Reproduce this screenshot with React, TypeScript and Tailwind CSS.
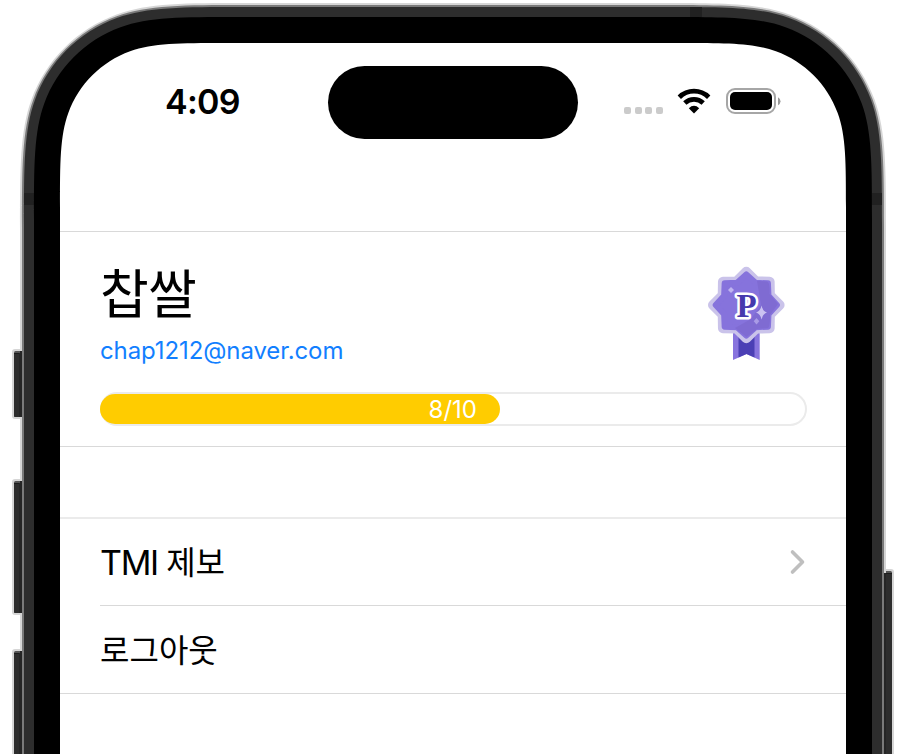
import React from "react";

const latin = "font-['Inter','Noto_Sans_CJK_KR',sans-serif]";
const korean = "font-['Noto_Sans_CJK_KR',sans-serif]";

// Top half of a continuous-corner rectangle, open past the bottom of the page.
function shell(left: number, top: number, right: number, r: number) {
  const k = [1.48, 1.08, 0.837, 0.631494, 0.074911, 0.372824, 0.169059];
  const [a, b, c, f, g, h, i] = k.map((n) => n * r);
  const L = (x: number, y: number) => `${left + x} ${top + y}`;
  const R = (x: number, y: number) => `${right - x} ${top + y}`;
  return [
    `M${left} 800 L${L(0, a)}`,
    `C${L(0, b)} ${L(0, c)} ${L(g, f)}`,
    `C${L(i, h)} ${L(h, i)} ${L(f, g)}`,
    `C${L(c, 0)} ${L(b, 0)} ${L(a, 0)}`,
    `L${R(a, 0)} C${R(b, 0)} ${R(c, 0)} ${R(f, g)}`,
    `C${R(h, i)} ${R(i, h)} ${R(g, f)}`,
    `C${R(0, c)} ${R(0, b)} ${R(0, a)} L${right} 800 Z`,
  ].join(" ");
}

function SideButton({ y, h, right = false }: { y: number; h: number; right?: boolean }) {
  return (
    <g transform={right ? "translate(906 0) scale(-1 1)" : undefined}>
      <rect x="12" y={y} width="14" height={h} rx="3" fill="#d6d6d6" />
      <rect x="14" y={y + 2} width="12" height={h - 4} rx="1.5" fill="#555" />
      <rect x="14" y={y + 4} width="12" height={h - 6} rx="1" fill="#2d2d2d" />
      <rect x="14" y={y + 4} width="8" height="1" fill="#1c1c1c" />
      <rect x={right ? 20 : 19} y={y + 4} width="3" height={h - 6} fill="#252525" />
    </g>
  );
}

function DeviceArtwork() {
  return (
    <svg className="pointer-events-none absolute inset-0" width="906" height="754" viewBox="0 0 906 754" aria-hidden="true">
      <SideButton y={349} h={70} />
      <SideButton y={479} h={136} />
      <SideButton y={649} h={140} />
      <SideButton y={569} h={220} right />
      <path d={shell(20, 3, 886, 153)} fill="#d6d6d6" />
      <path d="M20 351h2v66h-2zM20 481h2v132h-2zM20 651h2v110h-2zM884 573h2v190h-2z" fill="#252525" />
      <path d={shell(22, 5, 884, 150)} fill="#7a7a7a" />
      <path d={shell(24, 7, 882, 147)} fill="#2d2d2d" />
      <path d="M24 193h10v12H24zM872 193h10v12h-10zM690 7h12v10h-12z" fill="#212121" />
      <path d={shell(34, 17, 872, 137)} fill="#000" />
      <path d={shell(60, 43, 846, 111)} fill="#fff" />
    </svg>
  );
}

// Eight-pointed seal outline; the diagonal points are a little shorter.
function seal(tip: number, diagonal: number, valley: number) {
  return Array.from({ length: 16 }, (_, n) => {
    const r = n % 2 ? valley : n % 4 ? diagonal : tip;
    const t = (n * Math.PI) / 8;
    return `${(39.3 + r * Math.sin(t)).toFixed(2)},${(39 - r * Math.cos(t)).toFixed(2)}`;
  }).join(" ");
}

function Badge() {
  return (
    <svg width="78" height="95" viewBox="0 0 78 95" aria-hidden="true">
      <path d="M26 64H52.700V94L39.500 88L26 94Z" fill="#8874de" />
      <path d="M31.500 64H47.500V91.600L39.500 88L31.500 91.600Z" fill="#4b3fb5" />
      <polygon points={seal(33.3, 33, 25.5)} fill="#cac3ea" stroke="#cac3ea" strokeWidth="10" strokeLinejoin="round" />
      <polygon points={seal(30.6, 30.6, 24)} fill="#8673dc" stroke="#8673dc" strokeWidth="6" strokeLinejoin="round" />
      <path d="M50 15L60 15.500Q63 16 62.500 28L71 38L63 49Q63 61 61 62L50 63L39.500 71L28 62L44 53L54 39Z" fill="#7f6bd2" />
      <path d="M54.500 39.500Q55.500 45 60 46.500Q55.500 48 54.500 53.500Q53.500 48 49 46.500Q53.500 45 54.500 39.500Z" fill="#cbc2f1" />
      <path d="M24 21l3 3-3 3-3-3z" fill="#bfb4f0" />
      <path d="M49.500 52l2.800 3.300-2.800 3.300-2.800-3.300z" fill="#a99be6" />
      <text x="39.500" y="51" textAnchor="middle" fontFamily="Liberation Serif, serif" fontWeight="700" fontSize="33" fill="#4539ae" stroke="#fff" strokeWidth="5" strokeLinejoin="round" paintOrder="stroke">
        P
      </text>
    </svg>
  );
}

function StatusBar() {
  return (
    <header className="flex h-[96px] items-start">
      <div className={`${latin} mt-[39px] w-[268px] pl-[105px] text-[34px] leading-[40px] font-semibold tracking-[-0.7px]`}>4:09</div>
      <div className="mt-[23px] h-[73px] w-[250px] rounded-full bg-black" />
      <div className="ml-[46px] mt-[44px] flex items-start">
        <div className="mt-[20px] flex gap-[3.67px]">
          {[0, 1, 2, 3].map((n) => (
            <span key={n} className="size-[7px] rounded-[2px] bg-[#cbcbcb]" />
          ))}
        </div>
        <svg className="ml-[14px] mt-px" width="34" height="26" viewBox="0 0 34 26" fill="none" stroke="#000" aria-hidden="true">
          <path d="M2.300 9.200Q8.500 3.200 17 3.200T31.700 9.200" strokeWidth="4.800" />
          <path d="M7.800 15Q11.700 11.300 17 11.300T26.200 15" strokeWidth="4.700" />
          <path d="M11.800 20.200Q17 15.400 22.200 20.200L17 25.500Z" fill="#000" stroke="none" />
        </svg>
        <svg className="ml-[15px] mt-px" width="57" height="27" viewBox="0 0 57 27" aria-hidden="true">
          <rect x="1" y="1" width="48" height="24" rx="8" fill="none" stroke="#a6a6a6" strokeWidth="2" />
          <rect x="4" y="4" width="42" height="18" rx="5" />
          <path d="M52 9.200Q54.500 10.500 54.500 13.200T52 17.300Z" fill="#999" />
        </svg>
      </div>
    </header>
  );
}

export default function App() {
  return (
    <div className="relative h-[754px] w-[906px] overflow-hidden bg-white text-black">
      <DeviceArtwork />
      <main className="relative ml-[60px] w-[786px] pt-[43px]">
        <StatusBar />
        <section className="mt-[92px] h-[216px] border-y border-[#d9d9d9] px-[40px]">
          <div className="flex h-[160px] justify-between">
            <div>
              <h1 className={`${korean} mt-[22px] text-[53px] leading-[74px] font-normal tracking-[-0.8px]`}>찹쌀</h1>
              <p className={`${latin} mt-[8px] text-[24px] leading-[30px] tracking-[-0.1px] text-[#127fff]`}>chap1212@naver.com</p>
            </div>
            <div className="mr-[21px] mt-[34px]">
              <Badge />
            </div>
          </div>
          <div className="h-[34px] w-[707px] rounded-full border-2 border-[#ebebeb]">
            <div className={`${latin} -ml-[2px] h-[30px] w-[400px] rounded-full bg-[#ffcc00] pr-[23px] text-right text-[24px] leading-[31px] text-white`}>8/10</div>
          </div>
        </section>
        <nav className="mt-[70px] border-t-2 border-b border-t-[#ebebeb] border-b-[#d9d9d9] pl-[40px]">
          <div className={`${latin} flex h-[87px] items-center justify-between border-b border-[#d9d9d9] pr-[40px] text-[34px]`}>
            <span className="tracking-[-1.300px]">
              TMI <span className={`${korean} relative -top-px text-[32px] tracking-normal`}>제보</span>
            </span>
            <svg width="17" height="26" viewBox="0 0 17 26" fill="none" stroke="#bfbfbf" strokeWidth="3.600" strokeLinecap="round" strokeLinejoin="round" aria-hidden="true">
              <path d="M3.500 3L13.500 13L3.500 23" />
            </svg>
          </div>
          <div className={`${korean} flex h-[87px] items-center pb-[4px] text-[32px]`}>로그아웃</div>
        </nav>
      </main>
    </div>
  );
}
